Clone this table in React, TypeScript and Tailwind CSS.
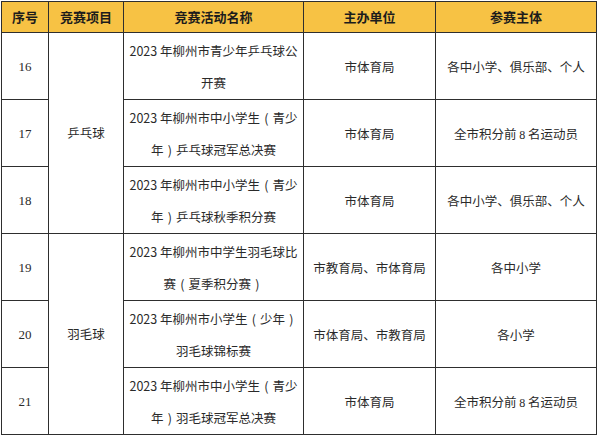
const cjk = "font-['Noto_Sans_CJK_SC','Noto_Sans',sans-serif]";
const serif = "font-['Liberation_Serif','Noto_Sans_CJK_SC',serif]";

type Row = {
  no: string;
  name: [string, string];
  host: string;
  target: string;
};

const rows: Row[] = [
  { no: '16', name: ['2023 年柳州市青少年乒乓球公', '开赛'], host: '市体育局', target: '各中小学、俱乐部、个人' },
  { no: '17', name: ['2023 年柳州市中小学生（青少', '年）乒乓球冠军总决赛'], host: '市体育局', target: '全市积分前 8 名运动员' },
  { no: '18', name: ['2023 年柳州市中小学生（青少', '年）乒乓球秋季积分赛'], host: '市体育局', target: '各中小学、俱乐部、个人' },
  { no: '19', name: ['2023 年柳州市中学生羽毛球比', '赛（夏季积分赛）'], host: '市教育局、市体育局', target: '各中小学' },
  { no: '20', name: ['2023 年柳州市小学生（少年）', '羽毛球锦标赛'], host: '市体育局、市教育局', target: '各小学' },
  { no: '21', name: ['2023 年柳州市中小学生（青少', '年）羽毛球冠军总决赛'], host: '市体育局', target: '全市积分前 8 名运动员' },
];

// full-width brackets drawn centred in their em box, as in the source document
function Line({ text }: { text: string }) {
  const parts = text.split(/([（）])/);
  return (
    <>
      {parts.map((p, i) =>
        p === '（' || p === '）' ? (
          <span key={i} className="inline-block w-[1em] text-center">
            {p === '（' ? '(' : ')'}
          </span>
        ) : (
          <span key={i}>{p}</span>
        ),
      )}
    </>
  );
}

function Target({ text }: { text: string }) {
  const parts = text.split(' 8 ');
  if (parts.length === 1) return <>{text}</>;
  return (
    <>
      {parts[0]} <span className={`${serif} text-[12px]`}>8</span> {parts[1]}
    </>
  );
}

const cell = 'border border-[#2e2e2e] text-center align-middle p-0';

export default function App() {
  return (
    <div className="w-[600px] h-[435px] bg-white pl-[1px] pt-[1px]">
      <table className={`table-fixed border-collapse w-[595px] text-[12.5px] text-[#2a2a2a] ${cjk}`}>
        <colgroup>
          <col className="w-[47px]" />
          <col className="w-[75px]" />
          <col className="w-[180px]" />
          <col className="w-[132px]" />
          <col className="w-[161px]" />
        </colgroup>
        <thead>
          <tr className="h-[31px] bg-[#f7c244] font-bold text-[13px] text-[#1c1c1c]">
            <th className={cell}>序号</th>
            <th className={cell}>竞赛项目</th>
            <th className={cell}>竞赛活动名称</th>
            <th className={cell}>主办单位</th>
            <th className={cell}>参赛主体</th>
          </tr>
        </thead>
        <tbody>
          {rows.map((r, i) => (
            <tr key={r.no} className={i === 0 ? 'h-[66px]' : 'h-[67px]'}>
              <td className={`${cell} ${serif} text-[13px] pt-[2px]`}>{r.no}</td>
              {i === 0 && (
                <td rowSpan={3} className={cell}>
                  乒乓球
                </td>
              )}
              {i === 3 && (
                <td rowSpan={3} className={cell}>
                  羽毛球
                </td>
              )}
              <td className={`${cell} leading-[32px] pt-[2px]`}>
                <Line text={r.name[0]} />
                <br />
                <Line text={r.name[1]} />
              </td>
              <td className={`${cell} pt-[2px]`}>{r.host}</td>
              <td className={`${cell} pt-[2px]`}>
                <Target text={r.target} />
              </td>
            </tr>
          ))}
        </tbody>
      </table>
    </div>
  );
}
